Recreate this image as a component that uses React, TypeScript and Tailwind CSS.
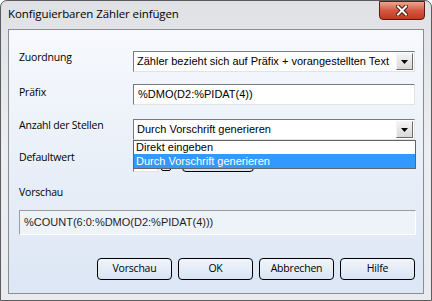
import React from 'react';

const ui = { fontFamily: '"Open Sans", "Liberation Sans", sans-serif' };
const ctl = { fontFamily: '"Liberation Sans", Arial, sans-serif' };

function Arrow() {
  return (
    <svg width="7" height="4" viewBox="0 0 7 4">
      <path d="M0 0h7L3.5 4z" fill="#000" />
    </svg>
  );
}

function Combo({ text }: { text: string }) {
  return (
    <div className="flex h-[21px] w-[282px] items-center border border-t-[#7a7a7a] border-l-[#7a7a7a] border-b-[#e3e3e3] border-r-[#e3e3e3] bg-white">
      <span className="flex-1 truncate pl-[3px] text-[11px] text-black" style={ctl}>{text}</span>
      <div className="mr-[1px] flex h-[17px] w-[17px] items-center justify-center border border-t-[#f4f4f4] border-l-[#f4f4f4] border-b-[#6a6a6a] border-r-[#6a6a6a] bg-gradient-to-b from-[#f3f3f3] to-[#d9d9d9]">
        <Arrow />
      </div>
    </div>
  );
}

function Btn({ label }: { label: string }) {
  return (
    <button className="flex h-[22px] w-[75px] items-center justify-center rounded-[4px] border border-black bg-gradient-to-b from-[#f1f5fb] to-[#d8e4f4] text-[10.5px] tracking-[-0.2px] text-black" style={ui}>
      {label}
    </button>
  );
}

const label = 'w-[114px] text-[10.5px] tracking-[-0.2px] text-black';

export default function App() {
  return (
    <div className="relative h-[301px] w-[432px] overflow-hidden rounded-t-[7px] border border-[#5c5c5c] bg-gradient-to-b from-[#dfe1e5] via-[#eceef1] to-[#e9ebee]" style={ui}>
      {/* title bar */}
      <div className="flex h-[28px] items-center justify-between pl-[7px]">
        <span className="mt-[-2px] text-[11.5px] tracking-[-0.1px] text-black">Konfiguierbaren Zähler einfügen</span>
        <div className="mr-[6px] mt-[-9px] flex h-[19px] w-[46px] items-center justify-center rounded-b-[4px] border border-[#5a1c12] bg-gradient-to-b from-[#eaa691] via-[#d3583f] to-[#c2381f]">
          <svg width="12" height="11" viewBox="0 0 12 11">
            <path d="M2 1.5l8 8M10 1.5l-8 8" stroke="#4a1a10" strokeWidth="4" strokeLinecap="square" />
            <path d="M2 1.5l8 8M10 1.5l-8 8" stroke="#fff" strokeWidth="2" strokeLinecap="square" />
          </svg>
        </div>
      </div>

      {/* client */}
      <div className="ml-[7px] h-[265px] w-[416px] border border-[#8a8d92] bg-gradient-to-b from-[#f7f9fd] to-[#dce6f4]">
        <div className="relative flex flex-col pl-[10px] pr-[8px] pt-[21px]">
          <div className="flex h-[21px] items-start">
            <span className={`mt-[-1px] ${label}`}>Zuordnung</span>
            <Combo text="Zähler bezieht sich auf Präfix + vorangestellten Text" />
          </div>

          <div className="mt-[12px] flex h-[21px] items-start">
            <span className={`mt-[1px] ${label}`}>Präfix</span>
            <div className="flex h-[21px] w-[282px] items-center border border-t-[#7a7a7a] border-l-[#7a7a7a] border-b-[#e3e3e3] border-r-[#e3e3e3] bg-white pl-[4px] text-[11px] text-black" style={ctl}>
              %DMO(D2:%PIDAT(4))
            </div>
          </div>

          <div className="mt-[14px] flex h-[21px] items-start">
            <span className={`mt-[-1px] ${label}`}>Anzahl der Stellen</span>
            <Combo text="Durch Vorschrift generieren" />
          </div>

          <div className="mt-[11px] flex h-[21px] items-start">
            <span className={`mt-[-1px] ${label}`}>Defaultwert</span>
            <div className="h-[21px] w-[25px] border border-t-[#7a7a7a] border-l-[#7a7a7a] border-b-[#e3e3e3] border-r-[#e3e3e3] bg-white" />
            <div className="ml-[3px] h-[20px] w-[10px] rounded-[2px] border border-black bg-[#eef2f8]" />
            <div className="ml-[11px] h-[21px] w-[72px] rounded-[4px] border border-black bg-gradient-to-b from-[#f1f5fb] to-[#d8e4f4]" />
          </div>

          <div className="mt-[13px] h-[15px] text-[10.5px] leading-[15px] tracking-[-0.2px] text-black">Vorschau</div>

          <div className="mt-[10px] flex h-[25px] w-[397px] items-center border border-t-[#9c9c9c] border-l-[#9c9c9c] border-b-[#ffffff] border-r-[#ffffff] bg-[#eef3fa] pl-[4px] text-[11px] text-[#1e1e1e]" style={ctl}>
            %COUNT(6:0:%DMO(D2:%PIDAT(4)))
          </div>

          <div className="mt-[23px] flex justify-end gap-[6px]">
            <Btn label="Vorschau" />
            <Btn label="OK" />
            <Btn label="Abbrechen" />
            <Btn label="Hilfe" />
          </div>

          {/* open dropdown list */}
          <div className="absolute left-[124px] top-[110px] w-[283px] border border-[#646464] bg-white text-[11px]" style={ctl}>
            <div className="h-[13px] pl-[2px] leading-[13px] text-black">Direkt eingeben</div>
            <div className="h-[14px] bg-[#3399ff] pl-[2px] leading-[14px] text-white">Durch Vorschrift generieren</div>
          </div>
        </div>
      </div>
    </div>
  );
}
